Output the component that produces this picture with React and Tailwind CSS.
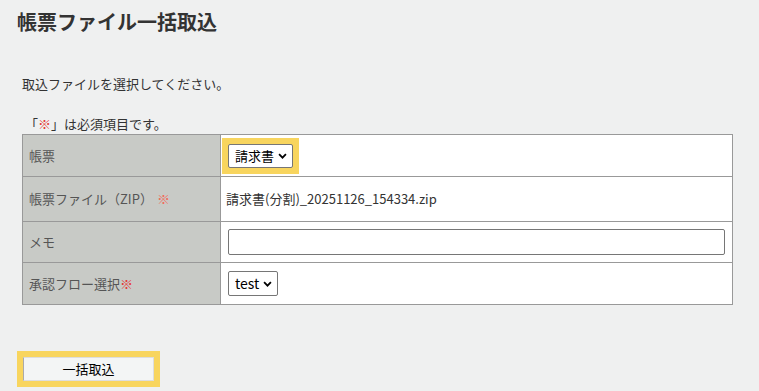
function Chevron() {
  return (
    <svg viewBox="0 0 10 6" className="pointer-events-none absolute right-[6px] top-1/2 h-[6px] w-[9px] -translate-y-1/2">
      <path d="M1.2 1 L5 4.8 L8.8 1" fill="none" stroke="#000" strokeWidth="2" />
    </svg>
  );
}

export default function App() {
  const font = { fontFamily: '"Noto Sans CJK JP", "Noto Sans", sans-serif' };
  return (
    <div className="min-h-screen w-full bg-[#eff0f0] text-[#333]" style={font}>
      <div className="px-[17px] pt-[8px]">
        <h1 className="text-[20px] font-bold leading-[28px] text-[#333]">帳票ファイル一括取込</h1>
      </div>

      <p className="mt-[38px] pl-[22px] text-[13px] leading-[20px] text-[#333]">
        取込ファイルを選択してください。
      </p>

      <p className="mt-[20px] pl-[25px] text-[13px] leading-[20px] text-[#333]">
        「<span className="text-[#e53935]">※</span>」は必須項目です。
      </p>

      <div className="pl-[22px]">
        <table className="w-[711px] border-collapse border border-[#999] bg-white text-[13px]">
          <tbody>
            <tr className="h-[42px]">
              <th className="w-[199px] border border-[#999] bg-[#c8cac6] pl-[6px] text-left font-normal text-[#555]">帳票</th>
              <td className="border border-[#999] pl-[1px]">
                <span className="inline-block bg-[#f8d55e] p-[6px] align-middle">
                  <span className="relative block h-[24px]">
                    <select className="block h-[24px] w-[65px] appearance-none rounded-[2px] border border-[#767676] bg-white pl-[6px] text-[13px] text-black">
                      <option>請求書</option>
                    </select>
                    <Chevron />
                  </span>
                </span>
              </td>
            </tr>
            <tr className="h-[45px]">
              <th className="border border-[#999] bg-[#c8cac6] pl-[6px] text-left font-normal text-[#555]">
                帳票ファイル（ZIP）<span className="ml-[4px] text-[#f26a5a]">※</span>
              </th>
              <td className="border border-[#999] pl-[5px] text-[#333]">請求書(分割)_20251126_154334.zip</td>
            </tr>
            <tr className="h-[41px]">
              <th className="border border-[#999] bg-[#c8cac6] pl-[6px] text-left font-normal text-[#555]">メモ</th>
              <td className="border border-[#999] pl-[7px] pr-[7px]">
                <input type="text" className="block h-[26px] w-[497px] rounded-[2px] border border-[#767676] bg-white" />
              </td>
            </tr>
            <tr className="h-[42px]">
              <th className="border border-[#999] bg-[#c8cac6] pl-[6px] text-left font-normal text-[#555]">
                承認フロー選択<span className="text-[#e53935]">※</span>
              </th>
              <td className="border border-[#999] pl-[7px]">
                <span className="relative inline-block h-[25px] align-middle">
                  <select className="block h-[25px] w-[50px] appearance-none rounded-[2px] border border-[#767676] bg-white pl-[6px] text-[14px] text-black">
                    <option>test</option>
                  </select>
                  <Chevron />
                </span>
              </td>
            </tr>
          </tbody>
        </table>
      </div>

      <div className="mt-[50px] pl-[23px]">
        <button className="h-[24px] w-[131px] border border-[#ddd] border-l-[#aaa] bg-[#f3f5f5] text-[13px] text-black outline outline-[6px] outline-[#f8d55e]">
          一括取込
        </button>
      </div>
    </div>
  );
}
